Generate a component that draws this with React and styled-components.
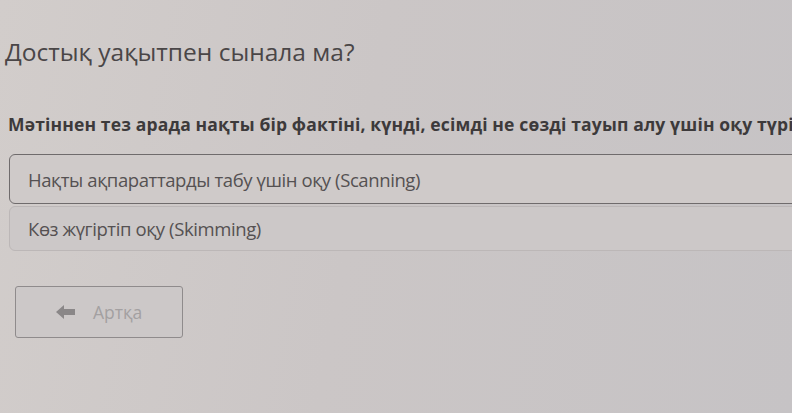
import React from "react";
import styled, { createGlobalStyle } from "styled-components";

const GlobalStyle = createGlobalStyle`
	html, body {
		margin: 0;
		padding: 0;
		background: #cbc6c5;
		overflow: hidden;
	}
	body {
		font-family: "Open Sans", "Noto Sans", sans-serif;
	}
`;

const Page = styled.div`
	width: 792px;
	height: 413px;
	overflow: hidden;
	background: linear-gradient(100deg, #d2cdcb 0%, #cbc6c6 45%, #c6c3c5 100%);
	padding: 35px 0 0 5px;
	box-sizing: border-box;
`;

const Title = styled.h1`
	margin: 0;
	font-size: 24.5px;
	line-height: 33px;
	font-weight: 400;
	color: #4a4647;
	white-space: nowrap;
`;

const Question = styled.p`
	margin: 45px 0 0 3px;
	font-size: 17.5px;
	line-height: 23px;
	font-weight: 700;
	color: #3d3a3b;
	white-space: nowrap;
	letter-spacing: 0.15px;
`;

const Options = styled.div`
	display: flex;
	flex-direction: column;
	gap: 2px;
	margin: 18px -30px 0 4px;
`;

const Option = styled.div`
	display: flex;
	align-items: center;
	height: ${(p) => (p.$active ? "50px" : "45px")};
	padding-left: 18px;
	border: 1px solid ${(p) => (p.$active ? "#6f6b6c" : "#bcb7b7")};
	border-radius: 6px;
	background: ${(p) => (p.$active ? "#cfcac9" : "#ccc8c8")};
	font-size: 18.5px;
	color: #555152;
	letter-spacing: -0.4px;
	white-space: nowrap;
	box-sizing: border-box;
`;

const BackButton = styled.button`
	display: flex;
	align-items: center;
	gap: 17px;
	margin: 35px 0 0 10px;
	width: 168px;
	height: 52px;
	padding: 0 0 0 40px;
	border: 1px solid #8f8b8c;
	border-radius: 3px;
	background: #ccc8c8;
	font-family: inherit;
	font-size: 17.5px;
	color: #a3a0a1;
	box-sizing: border-box;
`;

const Arrow = () => (
	<svg width="20" height="14" viewBox="0 0 20 14">
		<path d="M0 7 L8 0 L8 4 L19 4 L19 10 L8 10 L8 14 Z" fill="#8a8788" />
	</svg>
);

const App = () => {
	return (
		<>
			<GlobalStyle />
			<Page>
				<Title>Достық уақытпен сынала ма?</Title>
				<Question>
					Мәтіннен тез арада нақты бір фактіні, күнді, есімді не сөзді тауып алу үшін оқу түрін анықта
				</Question>
				<Options>
					<Option $active>Нақты ақпараттарды табу үшін оқу (Scanning)</Option>
					<Option>Көз жүгіртіп оқу (Skimming)</Option>
				</Options>
				<BackButton>
					<Arrow />
					Артқа
				</BackButton>
			</Page>
		</>
	);
};

export default App;
